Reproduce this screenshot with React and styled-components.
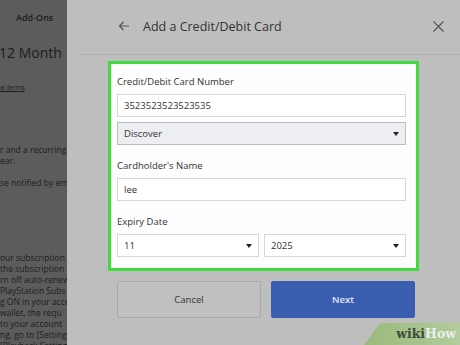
import styled, { createGlobalStyle } from "styled-components";

const GlobalStyle = createGlobalStyle`
    html, body {
        margin: 0;
        padding: 0;
        width: 460px;
        height: 345px;
        overflow: hidden;
        font-family: "Open Sans", "Noto Sans", sans-serif;
    }
`;

const Screen = styled("div")`
    position: relative;
    display: flex;
    width: 460px;
    height: 345px;
    overflow: hidden;
    background-color: #bebebe;
`;

const SidePanel = styled("div")`
    width: 67px;
    flex-shrink: 0;
    background-color: #5c5c5c;
    color: #1c1c1c;
    overflow: hidden;
    white-space: nowrap;
    display: flex;
    flex-direction: column;
`;

const SideTitle = styled("div")`
    font-size: 9px;
    font-weight: 600;
    padding: 11px 0 0 16px;
    height: 23px;
    flex-shrink: 0;
`;

const SideHeading = styled("div")`
    font-size: 14px;
    margin-left: -1px;
    height: 44px;
    line-height: 38px;
    flex-shrink: 0;
`;

const SideLink = styled("div")`
    font-size: 6.5px;
    text-decoration: underline;
    height: 66px;
    line-height: 20px;
    flex-shrink: 0;
`;

const SideText = styled("div")`
    font-size: 8.5px;
    line-height: 11px;
    flex-shrink: 0;
    margin-top: ${(props) => props.gap || "0px"};
`;

const Dialog = styled("div")`
    flex: 1;
    display: flex;
    flex-direction: column;
`;

const Header = styled("div")`
    display: flex;
    align-items: center;
    height: 55px;
    box-sizing: border-box;
    margin-left: 12px;
    padding: 0 16px 2px 39px;
    border-bottom: 1px solid #b0b0b0;
    color: #3a3a3a;
`;

const Title = styled("div")`
    flex: 1;
    font-size: 12.5px;
    margin-left: 13px;
    color: #333;
`;

const IconBtn = styled("div")`
    display: flex;
    align-items: center;
    justify-content: center;
`;

const Body = styled("div")`
    display: flex;
    flex-direction: column;
    padding: 6px 41px 0 41px;
`;

const FormCard = styled("div")`
    background-color: #fdfdfd;
    border: 3px solid #3fdc3f;
    padding: 7px 10px 14px 6px;
    display: flex;
    flex-direction: column;
    height: 210px;
    box-sizing: border-box;
`;

const Label = styled("div")`
    font-size: 9.5px;
    line-height: 13px;
    color: #333;
    margin: ${(props) => (props.first ? "4px" : "14px")} 0 6px 0;
`;

const Field = styled("div")`
    display: flex;
    align-items: center;
    justify-content: space-between;
    height: 23px;
    box-sizing: border-box;
    padding: 0 6px;
    font-size: 9.5px;
    color: #333;
    background-color: ${(props) => (props.select === "tint" ? "#eceef2" : "#ffffff")};
    border: 1px solid ${(props) => (props.select === "tint" ? "#b9bcc2" : "#d6d6d6")};
    margin-top: ${(props) => props.mt || "0px"};
    flex: ${(props) => (props.grow ? 1 : "none")};
`;

const Caret = styled("span")`
    width: 0;
    height: 0;
    border-left: 3px solid transparent;
    border-right: 3px solid transparent;
    border-top: 4px solid #222;
`;

const Row = styled("div")`
    display: flex;
    gap: 5px;
`;

const Buttons = styled("div")`
    display: flex;
    gap: 10px;
    padding: 10px 4px 0 9px;
`;

const Button = styled("div")`
    flex: 1;
    height: 37px;
    display: flex;
    align-items: center;
    justify-content: center;
    font-size: 9.5px;
    box-sizing: border-box;
    color: ${(props) => (props.primary ? "#e4eaf7" : "#333")};
    font-weight: ${(props) => (props.primary ? 600 : 400)};
    background-color: ${(props) => (props.primary ? "#3a5db0" : "#c0c0c0")};
    border: 1px solid ${(props) => (props.primary ? "#3a5db0" : "#a9a9a9")};
    border-radius: 2px;
`;

const Watermark = styled("div")`
    position: absolute;
    right: 0;
    bottom: 0;
    width: 96px;
    height: 22px;
    background: linear-gradient(90deg, #9bba7c 0%, #a7c48e 60%, #b2cc9c 100%);
    clip-path: polygon(16px 0, 100% 0, 100% 100%, 0 100%);
    display: flex;
    align-items: center;
    justify-content: flex-end;
    padding: 0 4px 2px 0;
    box-sizing: border-box;
    font-family: "DejaVu Serif", "Liberation Serif", serif;
    font-weight: bold;
    font-size: 12.5px;
`;

const Wiki = styled("span")`
    color: #3d4a3a;
`;

const How = styled("span")`
    color: #eeeeee;
`;

function ArrowLeft() {
    return (
        <svg width="12" height="12" viewBox="0 0 12 12" fill="none" stroke="#555" strokeWidth="1.2">
            <path d="M11 6H1.5M5.5 2L1.5 6l4 4" />
        </svg>
    );
}

function CloseIcon() {
    return (
        <svg width="11" height="11" viewBox="0 0 11 11" fill="none" stroke="#555" strokeWidth="1.2">
            <path d="M0.5 0.5l10 10M10.5 0.5l-10 10" />
        </svg>
    );
}

function App() {
    return (
        <Screen>
            <GlobalStyle />
            <SidePanel>
                <SideTitle>Add-Ons</SideTitle>
                <SideHeading>12 Month</SideHeading>
                <SideLink>al terms</SideLink>
                <SideText>r and a recurring</SideText>
                <SideText>ear.</SideText>
                <SideText gap="11px">se notified by email</SideText>
                <SideText gap="64px">our subscription</SideText>
                <SideText>the subscription</SideText>
                <SideText>rn off auto-renew</SideText>
                <SideText>PlayStation Subs</SideText>
                <SideText>g ON in your acco</SideText>
                <SideText> wallet, the requ</SideText>
                <SideText> to your account</SideText>
                <SideText>ng, go to [Settings</SideText>
                <SideText>[Playback Setting</SideText>
            </SidePanel>
            <Dialog>
                <Header>
                    <IconBtn>
                        <ArrowLeft />
                    </IconBtn>
                    <Title>Add a Credit/Debit Card</Title>
                    <IconBtn>
                        <CloseIcon />
                    </IconBtn>
                </Header>
                <Body>
                    <FormCard>
                        <Label first>Credit/Debit Card Number</Label>
                        <Field>3523523523523535</Field>
                        <Field select="tint" mt="5px">
                            Discover
                            <Caret />
                        </Field>
                        <Label>Cardholder's Name</Label>
                        <Field>lee</Field>
                        <Label>Expiry Date</Label>
                        <Row>
                            <Field grow>
                                11
                                <Caret />
                            </Field>
                            <Field grow>
                                2025
                                <Caret />
                            </Field>
                        </Row>
                    </FormCard>
                    <Buttons>
                        <Button>Cancel</Button>
                        <Button primary>Next</Button>
                    </Buttons>
                </Body>
            </Dialog>
            <Watermark>
                <Wiki>wiki</Wiki>
                <How>How</How>
            </Watermark>
        </Screen>
    );
}

export default App;
